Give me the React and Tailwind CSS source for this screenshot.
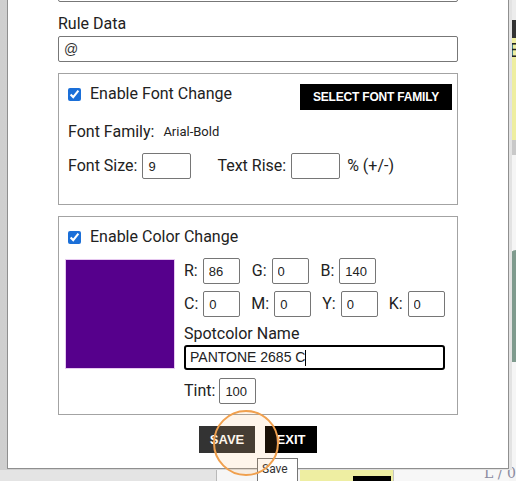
import React from "react";

const font = { fontFamily: "Roboto, 'Liberation Sans', sans-serif" };

const SmallInput = ({ value, className = "w-[37px]" }) => (
  <input
    type="text"
    defaultValue={value}
    className={`${className} h-[26px] border border-[#767676] rounded-[2px] bg-white px-[5px] text-[13px] text-[#222] font-['Liberation_Sans',Arial,sans-serif] outline-none`}
  />
);

const Field = ({ label, value }) => (
  <div className="flex items-center gap-[5px]">
    <span className="text-[16px] text-[#222]">{label}</span>
    <SmallInput value={value} />
  </div>
);

const PageBehind = () => (
  <div className="flex h-full w-full">
    <div className="flex flex-col flex-1">
      <div className="flex-1 bg-[#dcdcdc]" />
      <div className="flex h-[13px] relative">
        <div className="w-[216px] bg-[#e4e4e4]" />
        <div className="w-px bg-[#b9b9b9]" />
        <div className="w-[83px] bg-[#f6f6f6]" />
        <div className="w-[93px] bg-[#eeeea2] flex items-end justify-end pr-[2px]">
          <div className="w-[38px] h-[5px] bg-black" />
        </div>
        <div className="w-px bg-[#c4c4c4]" />
        <div className="flex-1 bg-[#f7f7f7]" />
        <span className="absolute left-[484px] top-[-2px] text-[14px] leading-none text-[#8a8aa0] font-['DejaVu_Serif',serif] whitespace-nowrap">
          L / 0
        </span>
      </div>
    </div>
    <div className="w-[7px] flex flex-col overflow-hidden">
      <div className="h-[20px] bg-[#ececec]" />
      <div className="h-[18px] bg-[#333]" />
      <div className="h-[102px] bg-[#eeeea0] relative">
        <span className="absolute left-0 top-[2px] text-[20px] leading-none text-[#222] font-['Liberation_Sans',sans-serif]">B</span>
        <div className="absolute left-0 top-[60px] w-[2px] h-[39px] bg-[#222]" />
      </div>
      <div className="h-[15px] bg-[#c9c9c9]" />
      <div className="h-[95px] bg-[#f5f5f5]" />
      <div className="h-[112px] bg-[#7f9b8e] rounded-tl-[8px]" />
      <div className="flex-1 bg-[#f5f5f5]" />
    </div>
  </div>
);

export default function App() {
  return (
    <div className="relative w-[516px] h-[481px] overflow-hidden" style={font}>
      <PageBehind />

      {/* rule editor dialog */}
      <div className="absolute left-0 top-0 w-[512px] h-[470px] bg-gradient-to-r from-[#cfcfcf] to-[#e3e3e3] pl-[7px] pr-[3px] pb-[1px]">
        <div className="h-full w-full bg-white border-l border-b border-r border-[#8f8f8f] px-[50px] flex flex-col">
          <div className="mt-[-24px] h-[26px] border border-[#777] rounded-[2px]" />

          <label className="mt-[10px] leading-6 text-[16px] text-[#222]">Rule Data</label>
          <input
            type="text"
            defaultValue="@"
            className="h-[26px] border border-[#777] rounded-[2px] px-[5px] text-[14px] text-[#333] font-['Liberation_Sans',Arial,sans-serif] outline-none"
          />

          {/* font change */}
          <div className="mt-[11px] h-[132px] border border-[#a3a3a3] pt-[10px] pl-[9px] pr-[5px] flex flex-col">
            <div className="flex items-start justify-between h-[26px]">
              <label className="h-[20px] flex items-center gap-[9px] text-[16px] text-[#222]">
                <input type="checkbox" defaultChecked className="w-[13px] h-[13px] m-0 accent-[#1b6fd8]" />
                Enable Font Change
              </label>
              <button className="w-[152px] h-[26px] bg-black text-white text-[12px] font-bold tracking-[-0.2px] font-['Liberation_Sans',Arial,sans-serif]">
                SELECT FONT FAMILY
              </button>
            </div>
            <div className="mt-[10px] h-[24px] flex items-center gap-[9px]">
              <span className="text-[16px] text-[#222]">Font Family:</span>
              <span className="text-[13px] text-[#222]">Arial-Bold</span>
            </div>
            <div className="mt-[9px] flex items-center">
              <span className="text-[16px] text-[#222] mr-[5px]">Font Size:</span>
              <SmallInput value="9" className="w-[49px]" />
              <span className="text-[16px] text-[#222] ml-[26px] mr-[5px]">Text Rise:</span>
              <SmallInput value="" className="w-[49px]" />
              <span className="text-[16px] text-[#222] ml-[7px]">% (+/-)</span>
            </div>
          </div>

          {/* color change */}
          <div className="mt-[11px] border border-[#a3a3a3] pt-[8px] pl-[9px] pb-[10px] flex flex-col">
            <label className="h-[24px] flex items-center gap-[9px] text-[16px] text-[#222]">
              <input type="checkbox" defaultChecked className="w-[13px] h-[13px] m-0 accent-[#1b6fd8]" />
              Enable Color Change
            </label>
            <div className="mt-[10px] flex gap-[9px] -ml-[3px]">
              <div className="w-[110px] h-[110px] bg-[rgb(86,0,140)] border border-[#e6c8f0]" />
              <div className="flex flex-col">
                <div className="flex items-center gap-[12px] -mt-px">
                  <Field label="R:" value="86" />
                  <Field label="G:" value="0" />
                  <Field label="B:" value="140" />
                </div>
                <div className="flex items-center gap-[11px] mt-[7px]">
                  <Field label="C:" value="0" />
                  <Field label="M:" value="0" />
                  <Field label="Y:" value="0" />
                  <Field label="K:" value="0" />
                </div>
                <span className="mt-[6px] leading-[22px] text-[16px] text-[#222]">Spotcolor Name</span>
                <div
                  role="textbox"
                  className="w-[261px] h-[25px] border-2 border-black rounded-[3px] flex items-center pl-[4px] text-[14px] text-[#222] font-['Liberation_Sans',Arial,sans-serif]"
                >
                  PANTONE 2685 C<span className="w-px h-[16px] bg-black" />
                </div>
                <div className="mt-[8px] flex items-center gap-[4px]">
                  <span className="text-[16px] text-[#222]">Tint:</span>
                  <SmallInput value="100" />
                </div>
              </div>
            </div>
          </div>

          <div className="mt-[11px] flex justify-center gap-[10px]">
            <button className="w-[56px] h-[27px] bg-[#333] text-white text-[13px] font-bold font-['Liberation_Sans',Arial,sans-serif]">
              SAVE
            </button>
            <button className="w-[52px] h-[27px] bg-black text-white text-[13px] font-bold font-['Liberation_Sans',Arial,sans-serif]">
              EXIT
            </button>
          </div>
        </div>
      </div>

      {/* hover tooltip */}
      <div className="absolute left-[257px] top-[458px] w-[41px] h-[26px] border border-[#767676] bg-white text-[12px] text-[#333] pl-[4px] pt-[4px] leading-none">
        Save
      </div>

      {/* click highlight ring */}
      <div className="absolute left-[213px] top-[410px] w-[66px] h-[66px] rounded-full border-[2.5px] border-[#f0a04e] bg-[#f39a3c]/10" />
    </div>
  );
}
